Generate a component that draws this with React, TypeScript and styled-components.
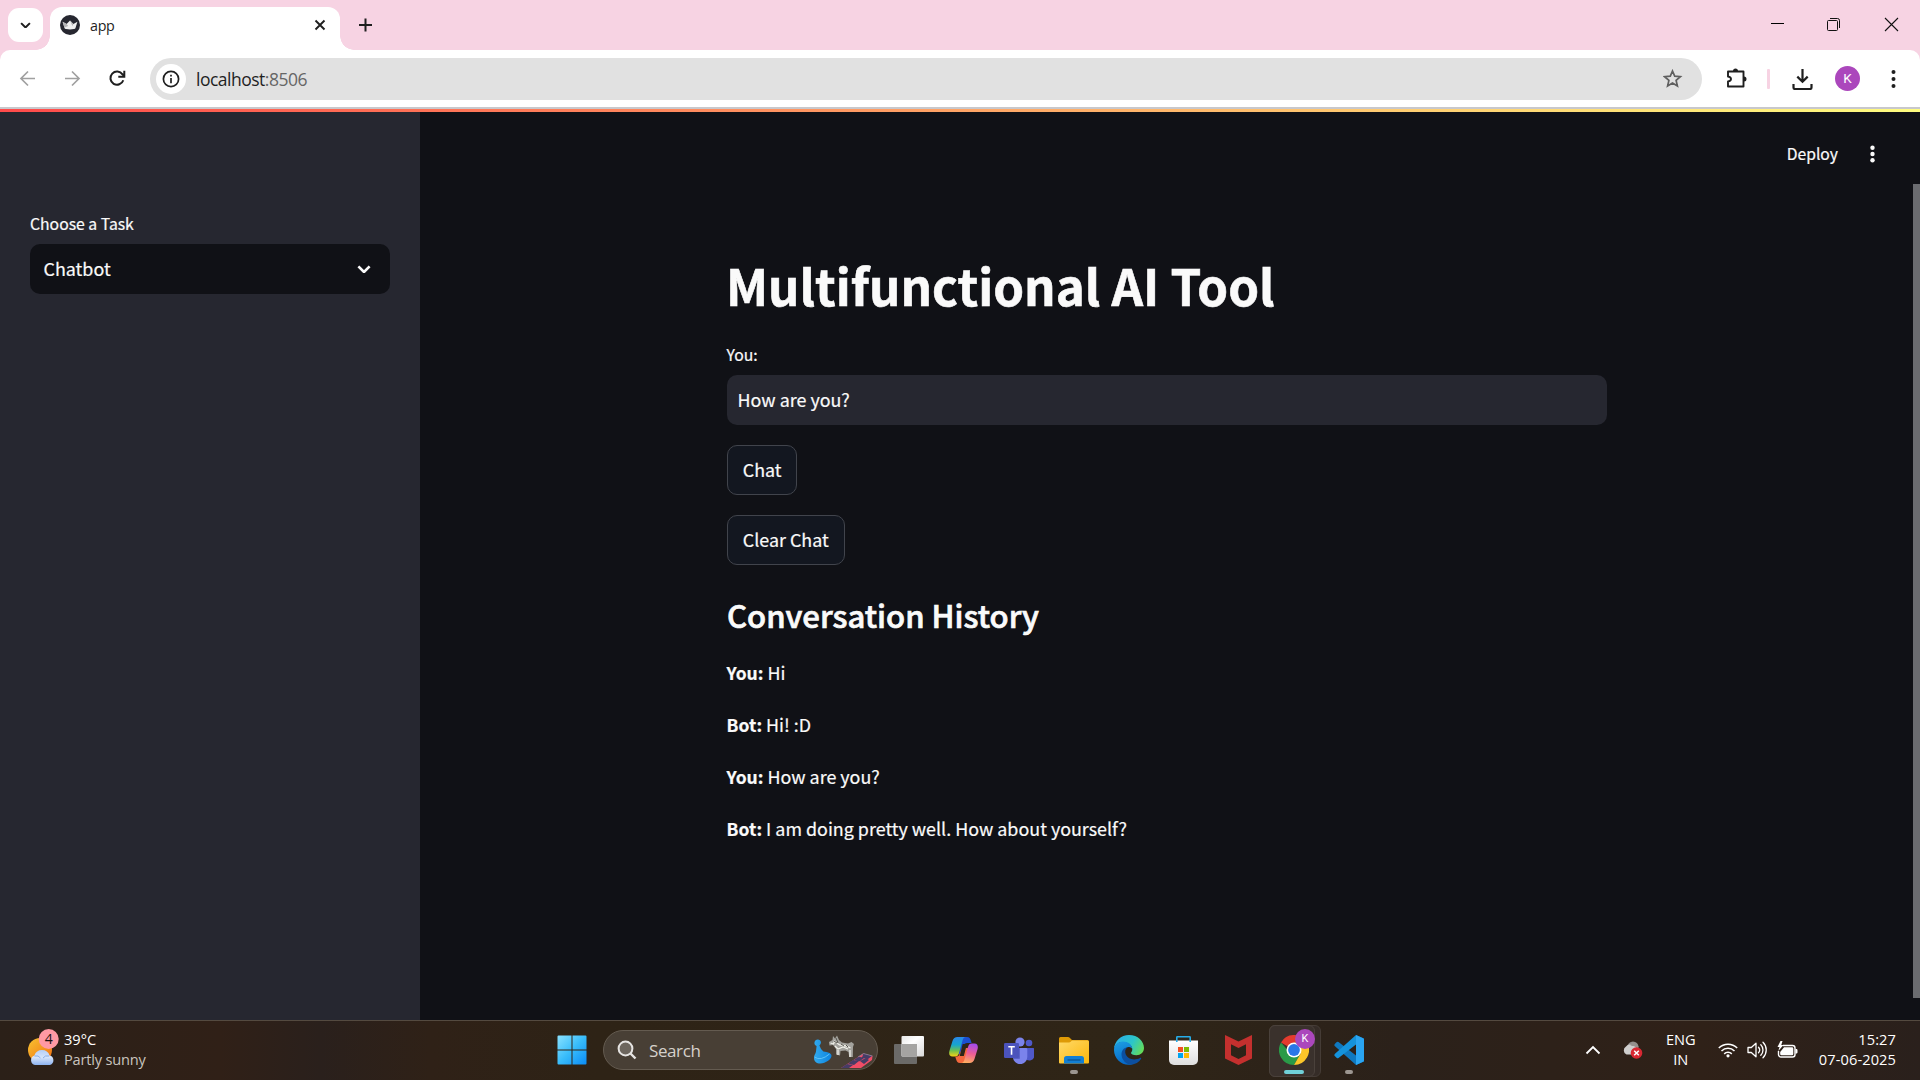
import React from 'react';
import styled, { createGlobalStyle } from 'styled-components';

const ui = '"Open Sans", "Noto Sans", sans-serif';
const source = '"Noto Sans CJK SC", "Noto Sans", sans-serif';

const Global = createGlobalStyle`
  * { box-sizing: border-box; }
  body { margin: 0; background: #101116; overflow: hidden; }
  svg { display: block; flex: none; }
  h1, h2, p { margin: 0; }
`;

const Screen = styled.div`
  width: 1920px;
  height: 1080px;
  display: flex;
  flex-direction: column;
  overflow: hidden;
  font-family: ${ui};
`;

/* ---------- browser frame ---------- */
const TabStrip = styled.header`
  height: 50px;
  flex: none;
  display: flex;
  align-items: flex-start;
  background: #f7d3e3;
  padding-left: 8px;
`;
const TabSearch = styled.button`
  width: 35px;
  height: 34px;
  margin: 8px 7px 0 0;
  padding: 0;
  border: 0;
  border-radius: 11px;
  background: #fff;
  display: grid;
  place-items: center;
`;
const Tab = styled.div`
  position: relative;
  width: 290px;
  height: 43px;
  margin-top: 7px;
  padding: 0 12px 7px 10px;
  border-radius: 12px 12px 0 0;
  background: #fff;
  display: flex;
  align-items: center;
  &::before, &::after {
    content: '';
    position: absolute;
    bottom: 0;
    width: 14px;
    height: 14px;
  }
  &::before { left: -14px; background: radial-gradient(circle at 0 0, transparent 13.5px, #fff 14px); }
  &::after { right: -14px; background: radial-gradient(circle at 100% 0, transparent 13.5px, #fff 14px); }
`;
const TabTitle = styled.span`
  flex: 1;
  margin-left: 10px;
  padding-top: 2px;
  font-size: 14.3px;
  line-height: 20px;
  letter-spacing: -0.3px;
  color: #1f1f1f;
`;
const NewTab = styled.div`
  margin: 18px 0 0 18px;
`;
const WindowControls = styled.div`
  margin: 17px 21px 0 auto;
  display: flex;
  gap: 42px;
`;
const ToolbarBack = styled.div`
  flex: none;
  background: #f7d3e3;
`;
const Toolbar = styled.div`
  height: 57px;
  background: #fff;
  border-radius: 10px 10px 0 0;
  display: flex;
  align-items: center;
  padding: 0 20px 0 19px;
`;
const NavButtons = styled.div`
  width: 131px;
  display: flex;
  gap: 28px;
`;
const Omnibox = styled.div`
  width: 1552px;
  height: 42px;
  margin-top: 1px;
  border-radius: 21px;
  background: #e1e1e1;
  display: flex;
  align-items: center;
  padding: 0 19px 0 6px;
`;
const SiteInfo = styled.div`
  width: 30px;
  height: 30px;
  border-radius: 50%;
  background: #fff;
  display: grid;
  place-items: center;
`;
const Url = styled.span`
  flex: 1;
  margin-left: 10px;
  font-size: 17.5px;
  line-height: 24px;
  letter-spacing: -0.5px;
  color: #1f1f1f;
  span { color: #666; }
`;
const ToolbarActions = styled.div`
  flex: 1;
  display: flex;
  align-items: center;
  padding-left: 24px;
`;
const Divider = styled.i`
  width: 3px;
  height: 20px;
  margin: 0 21px 0 20px;
  border-radius: 1px;
  background: #f7d3e3;
`;
const Avatar = styled.div<{ $size: number }>`
  width: ${p => p.$size}px;
  height: ${p => p.$size}px;
  border-radius: 50%;
  background: #ab47bc;
  color: #fff;
  font: ${p => p.$size * 0.54}px/${p => p.$size}px Roboto, sans-serif;
  text-align: center;
`;
const AccountButton = styled.div`
  margin: 0 27px 0 22px;
`;
const FrameEdge = styled.div`
  height: 2px;
  flex: none;
  background: #c8c8cc;
`;

/* ---------- page ---------- */
const Decoration = styled.div`
  height: 3px;
  flex: none;
  background: linear-gradient(90deg, #ff4b4b, #fffd80);
`;
const Page = styled.div`
  height: 908px;
  flex: none;
  display: flex;
  font-family: ${source};
  color: #fafafa;
  -webkit-text-stroke: 0.2px #fafafa;
`;
const Sidebar = styled.aside`
  width: 420px;
  padding: 97px 30px 0;
  background: #262730;
`;
const Label = styled.div`
  height: 30px;
  margin-bottom: 5px;
  font-size: 15.75px;
  line-height: 30px;
`;
const Select = styled.div`
  height: 50px;
  border-radius: 10px;
  background: #101116;
  display: flex;
  align-items: center;
  justify-content: space-between;
  padding: 0 19px 0 13.5px;
  font-size: 17.9px;
  line-height: 48px;
  span { height: 50px; }
`;
const Main = styled.main`
  flex: 1;
  background: #101116;
  display: flex;
  flex-direction: column;
  align-items: flex-start;
  padding-left: 307px;
`;
const AppToolbar = styled.div`
  align-self: stretch;
  height: 84px;
  padding-right: 35px;
  display: flex;
  align-items: center;
  justify-content: flex-end;
  gap: 28px;
  font-size: 15.7px;
  line-height: 24px;
`;
const Title = styled.h1`
  margin-top: 56px;
  height: 66px;
  margin-left: -1px;
  font-size: 49.3px;
  font-weight: 700;
  line-height: 66px;
  -webkit-text-stroke: 0.6px #fafafa;
`;
const FieldLabel = styled(Label)`
  margin-top: 22px;
  margin-left: -0.5px;
`;
const TextInput = styled.div`
  width: 880px;
  height: 50px;
  margin-bottom: 20px;
  padding-left: 10.5px;
  border-radius: 10px;
  background: #262730;
  font-size: 17.9px;
  line-height: 48px;
`;
const Button = styled.button`
  height: 50px;
  margin-bottom: 20px;
  padding: 0 14.8px 2px;
  border: 1px solid #41444c;
  border-radius: 10px;
  background: #131720;
  color: #fafafa;
  -webkit-text-stroke: 0.2px #fafafa;
  font: 17.9px/46px ${source};
`;
const Subheader = styled.h2`
  height: 44px;
  margin: 8px 0 19px;
  font-size: 31.1px;
  font-weight: 500;
  -webkit-text-stroke: 0.7px #fafafa;
  line-height: 43px;
`;
const Message = styled.p`
  height: 32px;
  margin: 0 0 20px -0.5px;
  font-size: 17.9px;
  line-height: 32px;
  strong { font-size: 17.5px; }
`;
const ScrollTrack = styled.div`
  width: 7px;
  padding-top: 72px;
  background: #101116;
`;
const ScrollThumb = styled.div`
  height: 814px;
  background: #6b6c70;
`;

/* ---------- taskbar ---------- */
const Taskbar = styled.footer`
  height: 60px;
  flex: none;
  display: flex;
  align-items: center;
  padding-bottom: 1px;
  border-top: 1px solid #544a40;
  background: linear-gradient(90deg, #2b2018 0, #302017 220px, #2a201c 320px, #2f2117 430px, #2e2316 600px, #2f2517 1130px, #2b211a 1400px, #2f2118 1700px, #2a201c 1920px);
`;
const Weather = styled.div`
  width: 544px;
  padding: 0 0 3px 26px;
  display: flex;
  gap: 4px;
`;
const Stack = styled.div<{ $align?: string; $width?: number }>`
  width: ${p => (p.$width ? p.$width + 'px' : 'auto')};
  text-align: ${p => p.$align || 'left'};
  font-size: 14.6px;
  line-height: 20px;
  white-space: nowrap;
  color: #fff;
`;
const TrayStack = styled(Stack)`
  padding-bottom: 2px;
`;
const Muted = styled.div`
  color: #c9c4bf;
  letter-spacing: -0.2px;
`;
const SearchBox = styled.div`
  width: 275px;
  height: 40px;
  margin: 0 3px 0 4px;
  padding: 0 4px 0 13px;
  border: 1px solid #645b50;
  border-radius: 20px;
  background: #483f35;
  display: flex;
  align-items: center;
  color: #d6d1cb;
  font-size: 17px;
  letter-spacing: -0.4px;
  span { flex: 1; margin-left: 12px; }
`;
const Slot = styled.div<{ $active?: boolean }>`
  position: relative;
  width: 55px;
  height: 50px;
  display: grid;
  place-items: center;
  ${p => p.$active && `
    &::before {
      content: ''; position: absolute; left: 3px; top: 0; width: 50px; height: 50px;
      background: #352c27; border: 1px solid #453c36; border-radius: 6px;
    }
    &::after {
      content: ''; position: absolute; left: 3px; top: 0; width: 44px; height: 50px;
      background: #3a312c; border: 1px solid #4a413b; border-radius: 6px;
    }
  `}
  svg { position: relative; z-index: 1; }
`;
const Indicator = styled.i<{ $active?: boolean }>`
  position: absolute;
  z-index: 1;
  bottom: 1px;
  left: ${p => (p.$active ? 18 : 24)}px;
  width: ${p => (p.$active ? 20 : 8)}px;
  height: 4px;
  border-radius: 2px;
  background: ${p => (p.$active ? '#70d0d8' : '#9c9691')};
`;
const ProfileBadge = styled.div`
  position: absolute;
  z-index: 2;
  right: 6px;
  top: 4px;
`;
const Tray = styled.div`
  margin-left: auto;
  padding-right: 24px;
  display: flex;
  align-items: center;
`;
const SyncStatus = styled.div`
  margin: 0 23px 0 21px;
`;
const TrayIcons = styled.div`
  width: 82px;
  display: flex;
  align-items: center;
  gap: 9.5px;
  margin: 0 19px 0 22px;
`;
const Clock = styled(TrayStack)`
  letter-spacing: 0.1px;
`;

const Chevron = ({ w, color, stroke }: { w: number; color: string; stroke: number }) => (
  <svg width={w} height={w * 0.6} viewBox="0 0 10 6">
    <path d="M1 1l4 4 4-4" fill="none" stroke={color} strokeWidth={stroke} />
  </svg>
);

const Favicon = () => (
  <svg width="20" height="20" viewBox="0 0 20 20">
    <circle cx="10" cy="10" r="10" fill="#262730" />
    <path d="M2.600 6.800l4 2.200L10 5.500l3.400 3.500 4-2.200L15.500 13q-.2.900-1.500 1.100-4 .6-8 0-1.300-.2-1.500-1.100z" fill="#f0f0f0" />
    <path d="M2.600 6.800l4 2.200 1.600 2-3.700 1.500zM10 5.500l3.400 3.500-1 2z" fill="#b4b4b6" />
  </svg>
);

const Dots = ({ color, r, gap }: { color: string; r: number; gap: number }) => (
  <svg width="12" height="24" viewBox="0 0 12 24" fill={color}>
    {[-1, 0, 1].map(i => <circle key={i} cx="6.500" cy={12 + i * gap} r={r} />)}
  </svg>
);

const WeatherIcon = () => (
  <svg width="34" height="38" viewBox="0 0 34 38">
    <defs>
      <linearGradient id="sun" x1="0" y1="0" x2="1" y2="1"><stop stopColor="#f7c331" /><stop offset="1" stopColor="#f26e10" /></linearGradient>
      <linearGradient id="cloud" x1="0" y1="0" x2="0" y2="1"><stop stopColor="#b4cff8" /><stop offset=".5" stopColor="#d5e4fb" /><stop offset="1" stopColor="#8cb2f0" /></linearGradient>
    </defs>
    <circle cx="14" cy="21" r="12" fill="url(#sun)" />
    <path d="M9 36a5 5 0 0 1-.6-9.600a8 8 0 0 1 15.200 0A5 5 0 0 1 24 36z" fill="url(#cloud)" />
    <path d="M8.500 27q4-1 6 2M23 27q-4-1-6 2" stroke="#8baee6" fill="none" />
    <circle cx="22.700" cy="10" r="10" fill="#ff99a4" />
    <text x="22.700" y="15.200" textAnchor="middle" fontFamily="Open Sans, sans-serif" fontSize="14" fill="#1c1010">4</text>
  </svg>
);

const WindowsIcon = () => (
  <svg width="30" height="30" viewBox="0 0 30 30">
    <defs><linearGradient id="win" x1="0" y1="0" x2="1" y2="1"><stop stopColor="#8ae2ff" /><stop offset=".5" stopColor="#38bcfb" /><stop offset="1" stopColor="#0a8bf5" /></linearGradient></defs>
    <path d="M.5 1.500a1 1 0 0 1 1-1H14.500V14.500H.5zM15.500.5H28.500a1 1 0 0 1 1 1V14.500H15.500zM.5 15.500H14.500V29.500H1.500a1 1 0 0 1-1-1zM15.500 15.500H29.500V28.500a1 1 0 0 1-1 1H15.500z" fill="url(#win)" />
  </svg>
);

const SearchArt = () => (
  <svg width="62" height="36" viewBox="0 0 62 36">
    <defs><linearGradient id="pawn"><stop stopColor="#31a9ee" /><stop offset="1" stopColor="#0c84e0" /></linearGradient></defs>
    <path d="M3 26c0-3 1.500-4 2-6.500l.6-5.500q-3-1.500-1.900-4.500a3.300 3.300 0 0 1 6.300.6q0 2.200-1.600 3.400 1.500 4.500 4 6 7 .5 8 3.500c1 4-6 8.500-11 8.500-4 0-6.400-2-6.400-5.500z" fill="url(#pawn)" />
    <path d="M3.500 25q6 4.500 15-3" stroke="#5cc2f8" fill="none" />
    <path d="M18 10l3.500-2 .5-4 2 2.500 2-3 2 4.500 3 2.500 6 1 3.500-1.500 2.500 2-1 3-.2 10h-3.600l-.7-5-3-1.500-5 .5-.5 4.500-4-1v-5.500l-3-4-3.500.5z" fill="#a3a29d" />
    <path d="M19.500 11l3 1 1-3 5 4 7 1 4 2M24 14l3 3 5-2 5 2M27 18v5M39 18v7" stroke="#efefe8" strokeWidth="1.300" fill="none" />
    <path d="M23 9l3 2M30 12l3 2M35 13l2 2M25 6l2 5" stroke="#56544e" fill="none" />
    <path d="M30 36L52.500 21.500 61.500 24l-.5 4-11 8z" fill="#f04d67" />
    <path d="M43 27.700l4.500-3 6 1-5 3.500zM52.500 21.500l4.500 1.200 4 1.300-4 3-6-1.500zM37 31.500l5-3.500 6 1-5 4zM49 29l6-3 3 2-5 4zM30 36l6-4 6 1-4 3z" fill="#463c66" />
    <path d="M47 25L52.500 21.500 61.500 24" stroke="#8a87a0" strokeWidth=".8" fill="none" />
  </svg>
);

const TaskViewIcon = () => (
  <svg width="30" height="28" viewBox="0 0 30 28">
    <defs><linearGradient id="tv" x1="0" y1="0" x2="1" y2="1"><stop stopColor="#e8e8e8" /><stop offset=".4" stopColor="#fff" /><stop offset="1" stopColor="#d8d8d8" /></linearGradient></defs>
    <rect y="8" width="23" height="20" rx="1" fill="#6b6a68" />
    <rect x="7.500" width="22.500" height="20.500" rx="1" fill="url(#tv)" />
    <path d="M7.500 8H23v12.500H8.500a1 1 0 0 1-1-1z" fill="#a5a4a2" />
  </svg>
);

const CopilotIcon = () => (
  <svg width="29" height="26" viewBox="0 0 29 26">
    <defs>
      <linearGradient id="cp1" x1="0" y1="0" x2="0" y2="1"><stop stopColor="#2a86e8" /><stop offset=".4" stopColor="#16a6cf" /><stop offset=".7" stopColor="#6dc150" /><stop offset="1" stopColor="#f7d314" /></linearGradient>
      <linearGradient id="cp2" x1=".6" y1="0" x2=".4" y2="1"><stop stopColor="#a44bed" /><stop offset=".5" stopColor="#ed5d95" /><stop offset="1" stopColor="#ffad60" /></linearGradient>
    </defs>
    <path d="M14 0h4c2.500 0 3.200 1.500 4 4l.6 2H18c-2 0-2.500 1-3 3l-2 8H7l3-13c.7-2.500 1.500-4 4-4z" fill="#1c4fd0" />
    <path d="M8.500 0H17c-2 0-3 1.500-3.600 4L10 16c-.7 2.500-1.700 3.500-4 3.500H3.500C.5 19.500-.3 17 .4 14L3.500 4C4.300 1.500 6 0 8.500 0z" fill="url(#cp1)" />
    <path d="M15 26h-4c-2.500 0-3.200-1.500-4-4l-.8-2.500c3 0 3.800-.5 4.800-3.500l2-5h7l-2 10c-.7 3-1.500 5-3 5z" fill="#f4683d" />
    <path d="M20.500 26H12c2 0 3-1.500 3.600-4L19 10c.7-2.500 1.700-3.500 4-3.500h2.500c3 0 3.800 2.500 3.100 5.500l-3.100 10c-.8 2.500-2.500 4-5 4z" fill="url(#cp2)" />
    <path d="M13.700 7h4.300l-3.200 12H10.700z" fill="#2d2517" />
  </svg>
);

const TeamsIcon = () => (
  <svg width="30" height="27" viewBox="0 0 30 27">
    <circle cx="16" cy="5" r="4.600" fill="#7b83eb" />
    <circle cx="25" cy="6" r="3.300" fill="#5059c9" />
    <path d="M19 11h10a1.300 1.300 0 0 1 1.300 1.300v6.200a5 5 0 0 1-9 3z" fill="#5059c9" />
    <path d="M9 11h13a1.300 1.300 0 0 1 1.300 1.300V20a7 7 0 0 1-14.300 0z" fill="#7b83eb" />
    <path d="M9 11h7v10a1 1 0 0 1-1 1H9.500z" fill="#5a62c8" />
    <rect y="6" width="15" height="15" rx="1.200" fill="#4b53bc" />
    <path d="M4.300 9.800h6.500M7.550 9.800v8" stroke="#fff" strokeWidth="1.600" />
  </svg>
);

const FolderIcon = () => (
  <svg width="30" height="27" viewBox="0 0 30 27">
    <defs><linearGradient id="fold" x1="0" y1="0" x2="1" y2="1"><stop stopColor="#ffd968" /><stop offset="1" stopColor="#fbb70b" /></linearGradient></defs>
    <path d="M0 1.500A1.500 1.500 0 0 1 1.500 0H9q1 0 1.700.7L13 3h15.500A1.500 1.500 0 0 1 30 4.500V10H0z" fill="#de9a06" />
    <path d="M0 5.500h10q1 0 1.700-.7L13 3.500h15.500A1.500 1.500 0 0 1 30 5v20.500a1 1 0 0 1-1 1H1a1 1 0 0 1-1-1z" fill="url(#fold)" />
    <path d="M5 26.500v-5A2.500 2.500 0 0 1 7.500 19h15a2.500 2.500 0 0 1 2.500 2.500v5z" fill="#127fd3" />
    <path d="M8.500 23h13" stroke="#0a5291" strokeWidth="1.300" />
  </svg>
);

const EdgeIcon = () => (
  <svg width="30" height="30" viewBox="0 0 30 30">
    <defs>
      <linearGradient id="eg1" x1="0" y1=".3" x2="1" y2=".7"><stop stopColor="#2aaee8" /><stop offset=".55" stopColor="#2cc5c9" /><stop offset="1" stopColor="#66dd56" /></linearGradient>
      <linearGradient id="eg2" x1="0" y1="0" x2=".3" y2="1"><stop stopColor="#1da0e4" /><stop offset="1" stopColor="#0669c8" /></linearGradient>
    </defs>
    <path d="M0 14C.5 6 7 0 15 0c9 0 15 6.300 15 13 0 4.500-3.500 7.200-7.500 7.200-3.500 0-5.500-1-5.500-2.200 0-.8 1.300-1.400 1.300-3.800C18.300 10 13 7 9 7 4 7 1 10.500 0 14z" fill="url(#eg1)" />
    <path d="M0 15C0 10 4 6.500 9 6.500c5 0 9.300 3 9.300 7.700-.5-1.500-2-2.500-3.800-2.200-3 .5-5 3.500-4.500 7 .6 5 5 9 10 9.300-1.500 1-3.300 1.500-5 1.500C7 30 0 23.500 0 15z" fill="url(#eg2)" />
    <path d="M13.500 12.300C11 14 10.500 17 12 20c2 4 8 6 14 3 .8-.4 1.500.2 1 1-2 3-5.500 5.500-10 5.500-5 0-9.500-5-9.500-10 0-4 2.500-7 6-7.200z" fill="#0c4f9f" />
  </svg>
);

const StoreIcon = () => (
  <svg width="29" height="29" viewBox="0 0 29 29">
    <defs><linearGradient id="st" x1="0" y1="0" x2="0" y2="1"><stop stopColor="#fff" /><stop offset="1" stopColor="#dedede" /></linearGradient></defs>
    <path d="M0 4.500h29V24a5 5 0 0 1-5 5H5a5 5 0 0 1-5-5z" fill="url(#st)" />
    <path d="M7.800 6V1.500a.8.8 0 0 1 .8-.8H20.400a.8.8 0 0 1 .8.800V6" fill="none" stroke="#27ade8" strokeWidth="1.600" />
    <path d="M9 11h5v5H9z" fill="#f25022" /><path d="M15 11h5v5h-5z" fill="#7fba00" />
    <path d="M9 17h5v5H9z" fill="#00a4ef" /><path d="M15 17h5v5h-5z" fill="#ffb900" />
  </svg>
);

const McAfeeIcon = () => (
  <svg width="27" height="30" viewBox="0 0 27 30">
    <path d="M0 0l13.500 6.500L27 0v23.500L13.500 30 0 23.500zM6 9.200v11l7.500 3.800 7.500-3.800v-11l-7.500 3.900z" fill="#c4302e" fillRule="evenodd" />
  </svg>
);

const ChromeIcon = () => (
  <svg width="30" height="30" viewBox="0 0 30 30">
    <path d="M15 15L2 7.500A15 15 0 0 1 28 7.500H15z" fill="#e33b2e" />
    <path d="M15 15h-6.500L2 7.500A15 15 0 0 0 15 30l6.500-11.200z" fill="#2a9a48" />
    <path d="M15 7.500h13A15 15 0 0 1 15 30l6.500-11.200z" fill="#fcc629" />
    <circle cx="15" cy="15" r="7.500" fill="#fff" />
    <circle cx="15" cy="15" r="5.900" fill="#2a77e8" />
  </svg>
);

const VSCodeIcon = () => (
  <svg width="30" height="30" viewBox="0 0 30 30">
    <path d="M22 0L30 3.500v23L22 30 1 11.300Q-.3 10 1 8.700L2.800 7q.8-.6 1.700 0L22 20.500z" fill="#0f78bf" />
    <path d="M22 30L1 21.300Q-.3 20 1 18.700L22 0v9.500L4.500 23q-.9.600-1.700 0L1 21.300z" fill="#1593dc" />
    <path d="M22 0l7 3.300a1.500 1.500 0 0 1 1 1.400v20.600a1.500 1.500 0 0 1-1 1.400L22 30z" fill="#2aa5f2" />
  </svg>
);

const SyncIcon = () => (
  <svg width="21" height="18" viewBox="0 0 21 18">
    <circle cx="11" cy="6" r="5.500" fill="#8d8a88" />
    <path d="M4.500 13.500A4.500 4.500 0 0 1 4 5.500Q7 2 10.500 5q5-1 6 3.500l1 5z" fill="#cfcecd" />
    <path d="M10 1.200q4.500-.5 6.500 4.300l-1 3q-2-4-7-4z" fill="#96918e" />
    <circle cx="14.500" cy="12" r="5.800" fill="#d92832" />
    <path d="M12.200 9.700l4.600 4.600M16.800 9.700l-4.600 4.600" stroke="#fff" strokeWidth="1.500" />
  </svg>
);

const WifiIcon = () => (
  <svg width="20" height="16" viewBox="0 0 20 16" fill="none" stroke="#fff" strokeWidth="1.500">
    <path d="M.8 6a13 13 0 0 1 18.400 0M3.500 9a9.200 9.200 0 0 1 13 0M6.200 11.900a5.400 5.400 0 0 1 7.600 0" />
    <circle cx="10" cy="13.800" r="1.600" fill="#fff" stroke="none" />
  </svg>
);
const SpeakerIcon = () => (
  <svg width="20" height="18" viewBox="0 0 20 18" fill="none" stroke="#fff" strokeWidth="1.300" strokeLinejoin="round">
    <path d="M1 6.500h3.300L9 2.200v13.600L4.300 11.500H1z" />
    <path d="M11.500 6.300a4 4 0 0 1 0 5.400M13.800 3.800a7.300 7.300 0 0 1 0 10.400M16 1.300a10.800 10.800 0 0 1 0 15.400" strokeLinecap="round" />
  </svg>
);
const BatteryIcon = () => (
  <svg width="21" height="18" viewBox="0 0 21 18">
    <path d="M6 4.500h9.500A2.500 2.500 0 0 1 18 7v6.500a2.500 2.500 0 0 1-2.500 2.500H4a2.500 2.500 0 0 1-2.500-2.500V10" fill="none" stroke="#fff" strokeWidth="1.400" />
    <path d="M7 6.200h8a1.300 1.300 0 0 1 1.300 1.300v5.500a1.300 1.300 0 0 1-1.300 1.300H4.500a1.300 1.300 0 0 1-1.300-1.300V11zM18.500 8h1.300q.7.500.7 1.200v2q0 .8-.7 1.300h-1.300zM3.500 0L.5 6h2L1.300 10 6.500 4H4.300L5.500 0z" fill="#fff" />
  </svg>
);

const messages = [
  { who: 'You', text: 'Hi' },
  { who: 'Bot', text: 'Hi! :D' },
  { who: 'You', text: 'How are you?' },
  { who: 'Bot', text: 'I am doing pretty well. How about yourself?' },
];

const apps = [
  { icon: <TaskViewIcon /> },
  { icon: <CopilotIcon /> },
  { icon: <TeamsIcon /> },
  { icon: <FolderIcon />, open: true },
  { icon: <EdgeIcon /> },
  { icon: <StoreIcon /> },
  { icon: <McAfeeIcon /> },
  { icon: <ChromeIcon />, open: true, active: true },
  { icon: <VSCodeIcon />, open: true },
];

export default function App() {
  return (
    <Screen>
      <Global />
      <TabStrip>
        <TabSearch><Chevron w={11} color="#1f1f1f" stroke={1.8} /></TabSearch>
        <Tab>
          <Favicon />
          <TabTitle>app</TabTitle>
          <svg width="16" height="16" viewBox="0 0 16 16"><path d="M3.500 3.500l9 9M12.500 3.500l-9 9" stroke="#1f1f1f" strokeWidth="1.900" /></svg>
        </Tab>
        <NewTab>
          <svg width="14" height="14" viewBox="0 0 14 14"><path d="M7.500 .5v13M1 7h13" stroke="#1f1f1f" strokeWidth="2" /></svg>
        </NewTab>
        <WindowControls>
          <svg width="15" height="15" viewBox="0 0 15 15"><path d="M1 6.500h13" stroke="#000" /></svg>
          <svg width="15" height="15" viewBox="0 0 15 15" fill="none" stroke="#111"><rect x=".5" y="3.500" width="10" height="10" rx="1" /><path d="M3 1.500h7.500a2 2 0 0 1 2 2V11" /></svg>
          <svg width="15" height="15" viewBox="0 0 15 15"><path d="M1 1l13 13M14 1L1 14" stroke="#111" strokeWidth="1.100" /></svg>
        </WindowControls>
      </TabStrip>
      <ToolbarBack>
        <Toolbar>
          <NavButtons>
            <svg width="17" height="17" viewBox="0 0 17 17" fill="none" stroke="#a0a0a0" strokeWidth="1.700"><path d="M16 8.500H2.500M9 1.500l-7 7 7 7" /></svg>
            <svg width="17" height="17" viewBox="0 0 17 17" fill="none" stroke="#a0a0a0" strokeWidth="1.700"><path d="M1 8.500h13.500M8 1.500l7 7-7 7" /></svg>
            <svg width="17" height="17" viewBox="0 0 17 17" fill="none" stroke="#1f1f1f" strokeWidth="2"><path d="M14.300 10.200a6.600 6.600 0 1 1-.8-5.800L15.300 6M15.300 .8v6H9.300" /></svg>
          </NavButtons>
          <Omnibox>
            <SiteInfo>
              <svg width="18" height="18" viewBox="0 0 18 18"><circle cx="9" cy="9" r="7.600" fill="none" stroke="#1f1f1f" strokeWidth="1.700" /><path d="M9 8v5.200M9 4.800v1.800" stroke="#1f1f1f" strokeWidth="1.700" /></svg>
            </SiteInfo>
            <Url>localhost<span>:8506</span></Url>
            <svg width="20" height="20" viewBox="0 0 20 20"><path d="M9.500 2l2.200 5.200 5.700.5-4.300 3.700 1.300 5.600-4.900-3-4.900 3 1.300-5.600L1.600 7.700l5.700-.5z" fill="none" stroke="#5f5f5f" strokeWidth="1.700" /></svg>
          </Omnibox>
          <ToolbarActions>
            <svg width="21" height="21" viewBox="0 0 21 21">
              <path d="M2 3.500h15.500v15H2v-5q3-.5 3-2.500t-3-2.500z" fill="none" stroke="#1f1f1f" strokeWidth="1.900" strokeLinejoin="round" />
              <path d="M7 3a2.500 2.500 0 0 1 5 0zM18 8.500a2.500 2.500 0 0 1 0 5z" fill="#1f1f1f" />
            </svg>
            <Divider />
            <svg width="22" height="22" viewBox="0 0 22 22" fill="none" stroke="#1f1f1f" strokeWidth="2.200"><path d="M11.500 1v12.500M6.300 8.600l5.200 5.200 5.200-5.200M2.500 16v3.500a1.500 1.500 0 0 0 1.500 1.500h15a1.500 1.500 0 0 0 1.500-1.500V16" /></svg>
            <AccountButton><Avatar $size={25}>K</Avatar></AccountButton>
            <Dots color="#1f1f1f" r={2} gap={7} />
          </ToolbarActions>
        </Toolbar>
      </ToolbarBack>
      <FrameEdge />
      <Decoration />
      <Page>
        <Sidebar>
          <Label>Choose a Task</Label>
          <Select><span>Chatbot</span><Chevron w={14} color="#fafafa" stroke={1.9} /></Select>
        </Sidebar>
        <Main>
          <AppToolbar><span>Deploy</span><Dots color="#fafafa" r={2.200} gap={6.300} /></AppToolbar>
          <Title>Multifunctional AI Tool</Title>
          <FieldLabel>You:</FieldLabel>
          <TextInput>How are you?</TextInput>
          <Button>Chat</Button>
          <Button>Clear Chat</Button>
          <Subheader>Conversation History</Subheader>
          {messages.map((m, i) => (
            <Message key={i}><strong>{m.who}:</strong> {m.text}</Message>
          ))}
        </Main>
        <ScrollTrack><ScrollThumb /></ScrollTrack>
      </Page>
      <Taskbar>
        <Weather>
          <WeatherIcon />
          <Stack>39°C<Muted>Partly sunny</Muted></Stack>
        </Weather>
        <Slot><WindowsIcon /></Slot>
        <SearchBox>
          <svg width="20" height="20" viewBox="0 0 20 20"><circle cx="8.500" cy="8.500" r="6.900" fill="#6d665e" stroke="#e6e4e2" strokeWidth="2" /><path d="M13.500 13.500l5 5" stroke="#e6e4e2" strokeWidth="2.400" /></svg>
          <span>Search</span>
          <SearchArt />
        </SearchBox>
        {apps.map((a, i) => (
          <Slot key={i} $active={a.active}>
            {a.icon}
            {a.active && <ProfileBadge><Avatar $size={20}>K</Avatar></ProfileBadge>}
            {a.open && <Indicator $active={a.active} />}
          </Slot>
        ))}
        <Tray>
          <svg width="16" height="10" viewBox="0 0 16 10"><path d="M1.500 8.500L8 2l6.500 6.500" fill="none" stroke="#fff" strokeWidth="1.800" /></svg>
          <SyncStatus><SyncIcon /></SyncStatus>
          <TrayStack $align="center" $width={30}>ENG<br />IN</TrayStack>
          <TrayIcons><WifiIcon /><SpeakerIcon /><BatteryIcon /></TrayIcons>
          <Clock $align="right">15:27<br />07-06-2025</Clock>
        </Tray>
      </Taskbar>
    </Screen>
  );
}
